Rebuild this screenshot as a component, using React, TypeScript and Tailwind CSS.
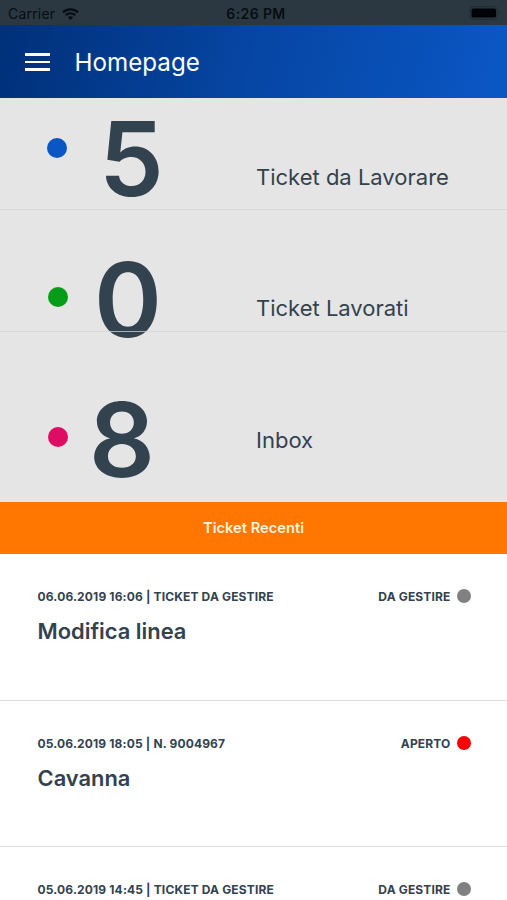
import clsx from 'clsx'

const counters = [
  {
    value: 5,
    label: 'Ticket da Lavorare',
    row: 'h-[111px]',
    dot: 'mt-[39.7px] ml-[47px] bg-[#0a56c4]',
    digit: 'mt-[9px] ml-[32px] w-[157px]',
    text: 'mt-[65px]',
  },
  {
    value: 0,
    label: 'Ticket Lavorati',
    row: 'h-[122px] border-t border-[#d8d9da]',
    dot: 'mt-[76.5px] ml-[47.5px] bg-[#059c17]',
    digit: 'mt-[38px] ml-[26.5px] w-[162px]',
    text: 'mt-[84px]',
  },
  {
    value: 8,
    label: 'Inbox',
    // sits above the previous row so its divider crosses the overflowing digit
    row: 'relative h-[171px] border-t border-[#d2d4d6]/75',
    dot: 'mt-[94.7px] ml-[47.5px] bg-[#de0c62]',
    digit: 'mt-[56px] ml-[21.5px] w-[167px]',
    text: 'mt-[94px]',
  },
]

const tickets = [
  { meta: '06.06.2019 16:06 | TICKET DA GESTIRE', status: 'DA GESTIRE', dot: 'bg-[#808080]', title: 'Modifica linea' },
  { meta: '05.06.2019 18:05 | N. 9004967', status: 'APERTO', dot: 'bg-[#ff0000]', title: 'Cavanna' },
  { meta: '05.06.2019 14:45 | TICKET DA GESTIRE', status: 'DA GESTIRE', dot: 'bg-[#808080]', title: '' },
]

function StatusBar() {
  return (
    <div className="grid h-[25px] shrink-0 grid-cols-3 items-center bg-[#2b3841] text-[#070d12]">
      <div className="flex items-center gap-[7px] pt-[3px] pl-[8px]">
        <span className="text-[14px] leading-none tracking-[0.2px]">Carrier</span>
        <svg className="h-[12px] w-[17px]" viewBox="0 0 17 12" fill="none" stroke="currentColor" strokeWidth="2.3">
          <path d="M1 4.3C5.2 0.4 11.8 0.4 16 4.3" />
          <path d="M3.8 7.2C6.5 4.8 10.5 4.8 13.2 7.2" />
          <path d="M5.9 9.3C7.4 8 9.6 8 11.1 9.3L8.5 12Z" fill="currentColor" stroke="none" />
        </svg>
      </div>
      <span className="pt-[3px] pl-[5px] text-center text-[14px] leading-none font-semibold tracking-[0.4px] whitespace-nowrap">
        6:26 PM
      </span>
      <svg className="mt-px mr-[6px] h-[14px] w-[32px] justify-self-end" viewBox="0 0 32 14">
        <rect x="1" y="0.7" width="27" height="12.6" rx="3.4" fill="none" stroke="#222e36" strokeWidth="1.2" />
        <rect x="2.5" y="2.4" width="24.5" height="9.2" rx="1.6" fill="#000305" />
        <path d="M29.6 4.8c1.6 0.6 1.6 3.8 0 4.4z" fill="#222e36" />
      </svg>
    </div>
  )
}

function Header() {
  return (
    <header className="flex h-[73px] shrink-0 items-center bg-[linear-gradient(105deg,#003078_0%,#0646a4_50%,#0a57c5_100%)] pt-px pl-[25px] text-white">
      <button className="flex w-[25px] flex-col gap-[5px]" aria-label="Menu">
        <span className="h-[2.5px] w-full bg-white" />
        <span className="h-[2.5px] w-full bg-white" />
        <span className="h-[2.5px] w-full bg-white" />
      </button>
      <h1 className="ml-[24.5px] pt-[2px] text-[24.2px] leading-none">Homepage</h1>
    </header>
  )
}

export default function App() {
  return (
    <div className="flex h-[900px] w-[507px] flex-col overflow-hidden bg-white font-['Inter',sans-serif] text-[#33424f]">
      <StatusBar />
      <Header />
      <section className="h-[404px] shrink-0 bg-[#e5e5e5]">
        {counters.map((c) => (
          <div key={c.label} className={clsx('flex items-start', c.row)}>
            <span className={clsx('h-[20px] w-[20px] shrink-0 rounded-full', c.dot)} />
            <span className={clsx('shrink-0 text-[103px] leading-[104px] font-semibold', c.digit)}>{c.value}</span>
            <span className={clsx('text-[22px] leading-[28px] whitespace-nowrap', c.text)}>{c.label}</span>
          </div>
        ))}
      </section>
      <div className="flex h-[52px] shrink-0 items-center justify-center bg-[#ff7700] text-[14.7px] font-semibold text-[#fff3df]">
        Ticket Recenti
      </div>
      {/* Recent tickets */}
      <ul>
        {tickets.map((t) => (
          <li key={t.meta} className="h-[146.5px] border-b border-[#dedede] pt-[33px] pr-[36.5px] pl-[37.5px]">
            <div className="flex items-center justify-between text-[12px] leading-[18px] font-bold tracking-[0.15px]">
              <span className="pt-px">{t.meta}</span>
              <span className="flex items-center gap-[6px]">
                <span className="pt-px">{t.status}</span>
                <span className={clsx('mb-px h-[14px] w-[14px] rounded-full', t.dot)} />
              </span>
            </div>
            <h2 className="mt-[9px] text-[21.9px] leading-[32px] font-semibold">{t.title}</h2>
          </li>
        ))}
      </ul>
    </div>
  )
}
